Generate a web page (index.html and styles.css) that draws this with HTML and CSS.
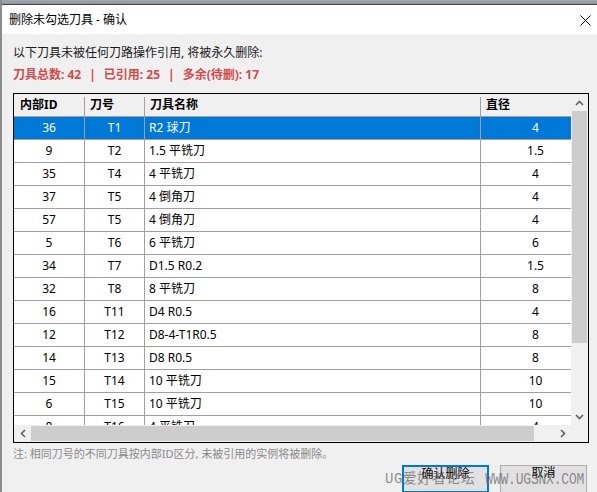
FILE: index.html
```html
<!DOCTYPE html>
<html lang="zh-CN">
<head>
    <meta charset="UTF-8">
    <title>删除未勾选刀具 - 确认</title>
    <meta name="viewport" content="width=device-width, initial-scale=1.0">
    <link rel="stylesheet" href="styles.css">
</head>
<body>

    <div class="window">
        <div class="frame-top"></div>

        <div class="titlebar">
            <span class="title">删除未勾选刀具 - 确认</span>
            <svg class="close" width="11" height="11" viewBox="0 0 11 11">
                <path d="M0.5 0.5 L10.5 10.5 M10.5 0.5 L0.5 10.5" stroke="#000" stroke-width="1" fill="none"/>
            </svg>
        </div>

        <div class="content">
            <p class="intro">以下刀具未被任何刀路操作引用, 将被永久删除:</p>
            <p class="stats">刀具总数: 42<span class="sep">|</span>已引用: 25<span class="sep">|</span>多余(待删): 17</p>

            <div class="list-box">
                <div class="list-main">
                    <div class="list-view">
                        <div class="row head">
                            <div class="cell">内部ID</div>
                            <div class="cell">刀号</div>
                            <div class="cell">刀具名称</div>
                            <div class="cell">直径</div>
                        </div>
                        <div class="row selected">
                            <div class="cell num">36</div><div class="cell num">T1</div><div class="cell name">R2 球刀</div><div class="cell num">4</div>
                        </div>
                        <div class="row">
                            <div class="cell num">9</div><div class="cell num">T2</div><div class="cell name">1.5 平铣刀</div><div class="cell num">1.5</div>
                        </div>
                        <div class="row">
                            <div class="cell num">35</div><div class="cell num">T4</div><div class="cell name">4 平铣刀</div><div class="cell num">4</div>
                        </div>
                        <div class="row">
                            <div class="cell num">37</div><div class="cell num">T5</div><div class="cell name">4 倒角刀</div><div class="cell num">4</div>
                        </div>
                        <div class="row">
                            <div class="cell num">57</div><div class="cell num">T5</div><div class="cell name">4 倒角刀</div><div class="cell num">4</div>
                        </div>
                        <div class="row">
                            <div class="cell num">5</div><div class="cell num">T6</div><div class="cell name">6 平铣刀</div><div class="cell num">6</div>
                        </div>
                        <div class="row">
                            <div class="cell num">34</div><div class="cell num">T7</div><div class="cell name">D1.5 R0.2</div><div class="cell num">1.5</div>
                        </div>
                        <div class="row">
                            <div class="cell num">32</div><div class="cell num">T8</div><div class="cell name">8 平铣刀</div><div class="cell num">8</div>
                        </div>
                        <div class="row">
                            <div class="cell num">16</div><div class="cell num">T11</div><div class="cell name">D4 R0.5</div><div class="cell num">4</div>
                        </div>
                        <div class="row">
                            <div class="cell num">12</div><div class="cell num">T12</div><div class="cell name">D8-4-T1R0.5</div><div class="cell num">8</div>
                        </div>
                        <div class="row">
                            <div class="cell num">14</div><div class="cell num">T13</div><div class="cell name">D8 R0.5</div><div class="cell num">8</div>
                        </div>
                        <div class="row">
                            <div class="cell num">15</div><div class="cell num">T14</div><div class="cell name">10 平铣刀</div><div class="cell num">10</div>
                        </div>
                        <div class="row">
                            <div class="cell num">6</div><div class="cell num">T15</div><div class="cell name">10 平铣刀</div><div class="cell num">10</div>
                        </div>
                        <div class="row">
                            <div class="cell num">8</div><div class="cell num">T16</div><div class="cell name">4 平铣刀</div><div class="cell num">4</div>
                        </div>
                    </div>

                    <!-- vertical scrollbar -->
                    <div class="vscroll">
                        <div class="sb-btn">
                            <svg width="9" height="6" viewBox="0 0 9 6"><polyline points="1,5 4.5,1.5 8,5" fill="none" stroke="#606060" stroke-width="1.6"/></svg>
                        </div>
                        <div class="vthumb"></div>
                        <div class="sb-fill"></div>
                        <div class="sb-btn">
                            <svg width="9" height="6" viewBox="0 0 9 6"><polyline points="1,1 4.5,4.5 8,1" fill="none" stroke="#606060" stroke-width="1.6"/></svg>
                        </div>
                    </div>
                </div>

                <!-- horizontal scrollbar -->
                <div class="hscroll">
                    <div class="sb-btn">
                        <svg width="6" height="9" viewBox="0 0 6 9"><polyline points="5,1 1.5,4.5 5,8" fill="none" stroke="#606060" stroke-width="1.6"/></svg>
                    </div>
                    <div class="hthumb"></div>
                    <div class="sb-fill"></div>
                    <div class="sb-btn">
                        <svg width="6" height="9" viewBox="0 0 6 9"><polyline points="1,1 4.5,4.5 1,8" fill="none" stroke="#606060" stroke-width="1.6"/></svg>
                    </div>
                    <div class="sb-corner"></div>
                </div>
            </div>

            <p class="note">注: 相同刀号的不同刀具按内部ID区分, 未被引用的实例将被删除。</p>

            <div class="buttons">
                <button class="btn btn-default">确认删除</button>
                <button class="btn">取消</button>
            </div>
        </div>

        <div class="watermark"><span class="wm-name">UG爱好者论坛</span><span class="wm-url">WWW.UGSNX.COM</span></div>
    </div>

</body>
</html>
```

FILE: styles.css
```css
body {
    margin: 0;
    font-family: "Noto Sans", "Noto Sans CJK SC", sans-serif;
    font-size: 12px;
    background-color: #f0f0f0;
}

.window {
    position: relative;
    width: 597px;
    height: 492px;
    overflow: hidden;
    box-sizing: border-box;
    border-left: 2px solid #8c8c8c;
    background-color: #f0f0f0;
}

.frame-top {
    height: 4px;
    background: linear-gradient(#a4a9ae, #8d9398);
    border-bottom: 1px solid #41464b;
}

.titlebar {
    height: 29px;
    background-color: #fff;
    display: flex;
    align-items: center;
    justify-content: space-between;
    padding: 0 6px 0 7px;
}

.title {
    color: #000;
    line-height: 16px;
}

.close {
    display: block;
    margin-top: 1px;
}

.content {
    padding: 11px 8px 0 11px;
}

.intro {
    margin: 0;
    line-height: 16px;
    color: #1a1a1a;
}

.stats {
    margin: 6px 0 0;
    line-height: 16px;
    color: #d44a4a;
    font-weight: bold;
}

.stats .sep {
    margin: 0 8px;
}

/* list view with its scrollbars */
.list-box {
    margin-top: 10px;
    border: 1px solid #000;
    background-color: #fff;
}

.list-main {
    display: flex;
    height: 331px;
}

.list-view {
    flex: 1;
    overflow: hidden;
}

.row {
    display: grid;
    grid-template-columns: 70px 60px 336px 110px;
    width: 576px;
    height: 23px;
    box-sizing: border-box;
    border-bottom: 1px solid #a0a0a0;
    color: #000;
}

.cell {
    line-height: 22px;
    white-space: nowrap;
    overflow: hidden;
    border-left: 1px solid #a0a0a0;
}

.cell:first-child {
    border-left: none;
}

.row.head {
    background-color: #f0f0f0;
}

.row.head .cell {
    border-left: none;
    padding-left: 6px;
    font-weight: bold;
    background: linear-gradient(#a0a0a0, #a0a0a0) left bottom / 1px 19px no-repeat;
}

.row.head .cell:first-child {
    background: none;
}

.cell.num {
    text-align: center;
}

.cell.name {
    padding-left: 4px;
}

.row.selected {
    background-color: #0078d7;
    color: #fff;
}

.vscroll {
    width: 17px;
    display: flex;
    flex-direction: column;
    background-color: #f0f0f0;
}

.sb-btn {
    width: 17px;
    height: 17px;
    display: flex;
    align-items: center;
    justify-content: center;
    flex-shrink: 0;
}

.sb-fill {
    flex: 1;
}

.vthumb {
    height: 232px;
    margin: 0 1px;
    background-color: #cdcdcd;
}

.hscroll {
    height: 17px;
    display: flex;
    background-color: #f0f0f0;
}

.hthumb {
    width: 503px;
    margin: 1px 0;
    background-color: #cdcdcd;
}

.sb-corner {
    width: 17px;
}

.note {
    margin: 4px 0 0;
    line-height: 14px;
    font-size: 11px;
    color: #8a8a8a;
}

.buttons {
    margin-top: 4px;
    display: flex;
    justify-content: flex-end;
    gap: 11px;
    padding-right: 2px;
}

.btn {
    width: 87px;
    height: 28px;
    box-sizing: border-box;
    border: 1px solid #adadad;
    background-color: #e1e1e1;
    font-family: inherit;
    font-size: 12px;
    line-height: 14px;
    color: #000;
    padding: 0 0 12px;
}

.btn-default {
    border: 2px solid #0078d7;
    padding-bottom: 10px;
}

/* forum stamp laid over the corner */
.watermark {
    position: absolute;
    left: 383px;
    top: 469px;
    display: flex;
    align-items: baseline;
    font-family: "Liberation Mono", "Noto Sans CJK SC", monospace;
    line-height: 20px;
    color: rgba(100, 100, 100, 0.72);
    white-space: nowrap;
}

.wm-name {
    font-size: 14px;
    letter-spacing: 0.5px;
}

.wm-url {
    margin-left: 10px;
    font-size: 13px;
    letter-spacing: -0.2px;
    transform: scaleY(1.25);
}
```
